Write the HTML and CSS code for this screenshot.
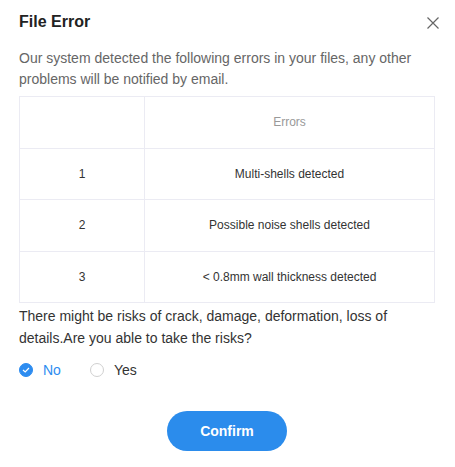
FILE: index.html
```html
<!DOCTYPE html>
<html lang="en">
<head>
    <meta charset="UTF-8">
    <meta name="viewport" content="width=device-width, initial-scale=1.0">
    <title>File Error</title>
    <link rel="stylesheet" href="styles.css">
</head>
<body>

    <div class="dialog">
        <div class="dialog-header">
            <h2>File Error</h2>
            <button class="close-btn" aria-label="Close">
                <svg width="12" height="12" viewBox="0 0 12 12">
                    <path d="M0.5 0.5 L11.5 11.5 M11.5 0.5 L0.5 11.5" stroke="#666" stroke-width="1.2" fill="none"/>
                </svg>
            </button>
        </div>

        <p class="note">Our system detected the following errors in your files, any other problems will be notified by email.</p>

        <!-- Errors table -->
        <table class="error-table">
            <thead>
                <tr>
                    <th class="col-index"></th>
                    <th>Errors</th>
                </tr>
            </thead>
            <tbody>
                <tr>
                    <td>1</td>
                    <td>Multi-shells detected</td>
                </tr>
                <tr>
                    <td>2</td>
                    <td>Possible noise shells detected</td>
                </tr>
                <tr>
                    <td>3</td>
                    <td>&lt; 0.8mm wall thickness detected</td>
                </tr>
            </tbody>
        </table>

        <p class="question">There might be risks of crack, damage, deformation, loss of details.Are you able to take the risks?</p>

        <!-- Answer options -->
        <div class="options">
            <label class="option checked">
                <span class="radio">
                    <svg width="8" height="6" viewBox="0 0 8 6">
                        <path d="M1 3 L3.2 5 L7 1" stroke="#fff" stroke-width="1.2" fill="none"/>
                    </svg>
                </span>
                No
            </label>
            <label class="option">
                <span class="radio"></span>
                Yes
            </label>
        </div>

        <div class="footer">
            <button class="confirm-btn">Confirm</button>
        </div>
    </div>

</body>
</html>
```

FILE: styles.css
```css
body {
    font-family: "Liberation Sans", Arial, sans-serif;
    background-color: #ffffff;
    margin: 0;
    padding: 0;
}

.dialog {
    width: 416px;
    padding: 11px 20px 0 19px;
}

.dialog-header {
    display: flex;
    justify-content: space-between;
    align-items: flex-start;
}

.dialog-header h2 {
    margin: 0;
    font-size: 16px;
    line-height: 22px;
    font-weight: bold;
    color: #222;
}

.close-btn {
    border: none;
    background: none;
    padding: 0;
    margin: 6px -4px 0 0;
    width: 12px;
    height: 12px;
    display: flex;
    cursor: pointer;
}

.note {
    margin: 15px 0 6px;
    font-size: 14px;
    line-height: 21px;
    color: #666;
}

.error-table {
    width: 100%;
    border-collapse: collapse;
    table-layout: fixed;
}

.error-table th,
.error-table td {
    border: 1px solid #ebebf3;
    height: 50.5px;
    padding: 0;
    text-align: center;
    font-size: 12px;
    color: #333;
}

.error-table th {
    font-weight: normal;
    color: #999;
}

.error-table .col-index {
    width: 124px;
}

.question {
    margin: 2px 0 0;
    font-size: 14px;
    line-height: 22px;
    color: #333;
}

.options {
    display: flex;
    gap: 29px;
    margin-top: 10px;
    height: 22px;
}

.option {
    display: flex;
    align-items: center;
    gap: 10px;
    font-size: 14px;
    color: #333;
    cursor: pointer;
}

.option.checked {
    color: #2d8cf0;
}

.radio {
    width: 14px;
    height: 14px;
    border: 1px solid #d0d0d0;
    border-radius: 50%;
    box-sizing: border-box;
    display: flex;
    align-items: center;
    justify-content: center;
    background-color: #fff;
}

.option.checked .radio {
    border-color: #2d8cf0;
    background-color: #2d8cf0;
}

.footer {
    display: flex;
    justify-content: center;
    margin-top: 30px;
}

.confirm-btn {
    width: 120px;
    height: 40px;
    border: none;
    border-radius: 20px;
    background-color: #2b8cec;
    color: #fff;
    font-family: inherit;
    font-size: 14px;
    font-weight: bold;
    cursor: pointer;
}
```
